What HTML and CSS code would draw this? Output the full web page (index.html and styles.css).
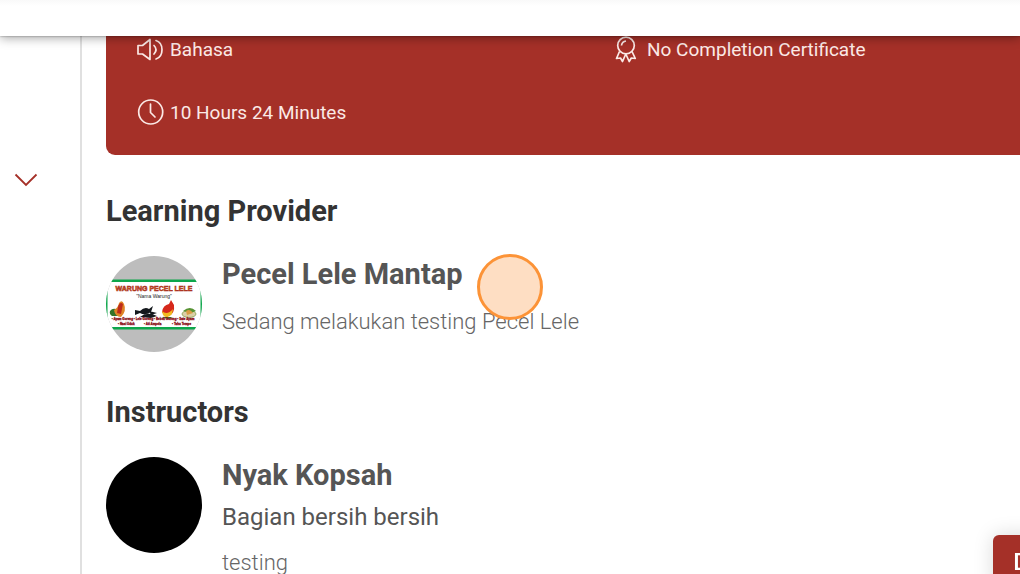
FILE: index.html
```html
<!DOCTYPE html>
<html lang="id">
<head>
<meta charset="utf-8">
<meta name="viewport" content="width=device-width, initial-scale=1">
<title>Learning Provider</title>
<link rel="stylesheet" href="styles.css">
</head>
<body>
<header class="topbar"></header>
<div class="layout">
  <aside class="sidebar">
    <button class="toggle" type="button" aria-label="Expand">
      <svg width="24" height="14" viewBox="0 0 24 14" fill="none" stroke="#a53028" stroke-width="1.8"><path d="M1.5 1.5 12 12 22.500 1.500"/></svg>
    </button>
  </aside>
  <main class="content">
    <section class="summary">
      <div class="fact">
        <svg width="28" height="28" viewBox="0 0 28 28" fill="none" stroke="#fbe9e6" stroke-width="1.7" stroke-linejoin="round" stroke-linecap="round"><path d="M2 9.500H6.500L14 3.500V23.500L6.500 18H2ZM18 9.500Q22 13.500 18 18M20 4.500C28 7 28 20.500 20 23"/></svg>
        <span>Bahasa</span>
      </div>
      <div class="fact">
        <svg width="28" height="28" viewBox="0 0 28 28" fill="none" stroke="#fbe9e6" stroke-width="1.700" stroke-linejoin="round"><circle cx="13" cy="9.500" r="8.300"/><path d="M8.500 9.500Q9 5.500 13 5M6.500 15.500 3.500 22.500 7.500 22 9.500 25.500 12.800 18 16.200 25.500 18.300 22 22.300 22.500 19 15.500"/></svg>
        <span>No Completion Certificate</span>
      </div>
      <div class="fact">
        <svg width="28" height="28" viewBox="0 0 28 28" fill="none" stroke="#fbe9e6" stroke-width="1.700" stroke-linecap="round"><circle cx="14.700" cy="13" r="12"/><path d="M14.500 5V13.500L19 18"/></svg>
        <span>10 Hours 24 Minutes</span>
      </div>
    </section>

    <section class="group">
      <h2 class="heading">Learning Provider</h2>
      <div class="person">
        <svg class="avatar" viewBox="0 0 96 96" role="img" aria-label="Warung Pecel Lele">
          <defs><clipPath id="round"><circle cx="48" cy="48" r="48"/></clipPath></defs>
          <g clip-path="url(#round)">
            <path fill="#bdbdbd" d="M0 0H96V96H0z"/>
            <path fill="#fff" d="M0 24H96V73H0z"/>
            <path fill="#0da64b" d="M0 23.500H96V26H0zM0 71H96V73.500H0zM0 24H1.500V73H0zM94.500 24H96V73H94.500z"/>
            <text class="banner-title" x="48" y="35" text-anchor="middle">WARUNG PECEL LELE</text>
            <text class="banner-name" x="48" y="42" text-anchor="middle">"Nama Warung"</text>
            <path fill="#347329" d="M4 55Q7 51 12 54Q16 57 12 60H6Q3 58 4 55"/>
            <path fill="#df8426" d="M8 54Q12 52 13 47Q16 43 18 48Q21 55 15 61Q9 61 8 54"/>
            <path fill="#bd2b1b" d="M12 51Q14 45 17 48L15 58 11 57z"/>
            <path fill="#15191d" d="M29 54 34 55Q39 50 43 53L47 50 45 56Q39 60 34 57L29 59zM34 61Q41 55 51 60L45 62zM43 55 51 57 45 59z"/>
            <path fill="#d6281b" d="M56 56Q57 49 63 48L65 44 68 49Q69 57 63 60L58 59z"/>
            <path fill="#f1b91f" d="M56 55Q61 60 67 53L66 58Q61 64 57 59z"/>
            <path fill="#327129" d="M55 61H67L62 63z"/>
            <ellipse cx="83" cy="58" rx="7" ry="3.500" fill="#dbcfa7" stroke="#76973c" stroke-width=".7"/>
            <path fill="#579334" d="M77 55Q84 49 90 55L85 57z"/><path fill="#da9c45" d="M80 55Q84 52 87 57L81 59z"/>
            <text class="banner-menu" x="47" y="64" text-anchor="middle">• Ayam Goreng • Lele Goreng • Bebek Goreng • Sate Ayam</text>
            <text class="banner-menu" x="12" y="69">• Nasi Uduk</text>
            <text class="banner-menu" x="38" y="69">• Ati Ampela</text>
            <text class="banner-menu" x="66" y="69">• Tahu Tempe</text>
          </g>
        </svg>
        <div class="details">
          <h3 class="name">Pecel Lele Mantap</h3>
          <p class="about">Sedang melakukan testing Pecel Lele</p>
          <span class="pointer"></span>
        </div>
      </div>
    </section>

    <section class="group">
      <h2 class="heading">Instructors</h2>
      <div class="person">
        <div class="avatar photo"></div>
        <div class="details">
          <h3 class="name">Nyak Kopsah</h3>
          <p class="role">Bagian bersih bersih</p>
          <p class="about instructor-about">testing</p>
        </div>
      </div>
    </section>
  </main>
</div>
<button class="action" type="button">D</button>
</body>
</html>
```
FILE: styles.css
```css
* { box-sizing: border-box; }
html { overflow: hidden; }
body {
  margin: 0;
  height: 100vh;
  overflow: hidden;
  display: flex;
  flex-direction: column;
  background: #fff;
  color: #333;
  font-family: Roboto, "Liberation Sans", sans-serif;
}
h2, h3, p { margin: 0; }
svg { flex: none; display: block; }
.topbar {
  flex: none;
  height: 36px;
  position: relative;
  z-index: 2;
  background: linear-gradient(#f9f9f9, #fff 6px);
  box-shadow: 0 0 2px rgba(0, 0, 0, .4), 0 2px 10px rgba(0, 0, 0, .35);
}
.layout { flex: 1; display: flex; min-height: 0; }
.sidebar {
  flex: none;
  width: 82px;
  padding: 137px 14px 0;
  border-right: 2px solid #e0e0e0;
}
.toggle { display: block; padding: 0; border: 0; background: none; }
.content { flex: 1; min-width: 0; padding-left: 24px; }
.summary {
  display: grid;
  grid-template-columns: 477px 1fr;
  row-gap: 35px;
  padding: 0 30px 28px;
  background: #a53028;
  border-bottom-left-radius: 9px;
}
.fact {
  display: flex;
  align-items: center;
  gap: 6px;
  color: #fbe9e6;
  font-size: 19px;
  line-height: 28px;
}
.heading { font-size: 29px; line-height: 36px; font-weight: 700; }
.group { padding-top: 38px; }
.group + .group { padding-top: 42px; }
.person { display: flex; gap: 20px; padding-top: 27px; }
.avatar { flex: none; width: 96px; height: 96px; }
.photo { border-radius: 50%; background: #000; }
.details { position: relative; color: #555; }
.name { font-size: 29px; line-height: 36px; font-weight: 700; }
.role { padding-top: 8px; font-size: 24px; line-height: 32px; }
.about {
  padding-top: 16px;
  font-size: 22px;
  line-height: 28px;
  font-weight: 300;
  color: #666;
}
.pointer {
  position: absolute;
  left: 255px;
  top: -2px;
  width: 66px;
  height: 66px;
  border: 3px solid #fc9337;
  border-radius: 50%;
  background: rgba(252, 147, 55, .3);
}
.banner-title { font: 700 7px "Liberation Sans", sans-serif; fill: #d6781d; stroke: #a31b17; stroke-width: .5px; }
.banner-name { font: 5px "Liberation Sans", sans-serif; fill: #222; }
.banner-menu { font: 700 3px "Liberation Sans", sans-serif; fill: #8c1018; stroke: #8c1018; stroke-width: .3px; }
.action {
  position: fixed;
  right: -41px;
  bottom: -15px;
  padding: 12px 32px 12px 20px;
  border: 0;
  border-radius: 6px;
  background: #a53028;
  color: #fff;
  box-shadow: 0 0 20px rgba(0, 0, 0, .15);
  font: 500 24px/30px Roboto, sans-serif;
}
```
